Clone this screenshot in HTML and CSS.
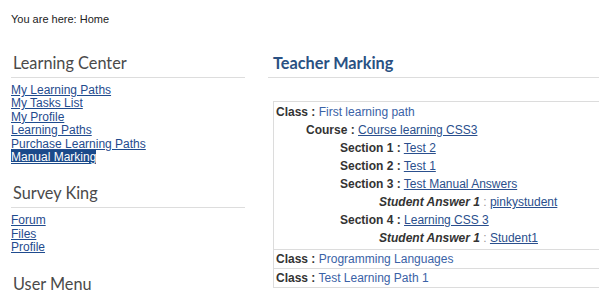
FILE: index.html
```html
<!DOCTYPE html>
<html lang="en">
<head>
    <meta charset="UTF-8">
    <title>Teacher Marking</title>
    <link rel="stylesheet" href="styles.css">
</head>
<body>
    <div class="crumbs">You are here: Home</div>

    <div class="page">
        <div class="sidebar">
            <h3>Learning Center</h3>
            <ul class="menu">
                <li><a href="#">My Learning Paths</a></li>
                <li><a href="#">My Tasks List</a></li>
                <li><a href="#">My Profile</a></li>
                <li><a href="#">Learning Paths</a></li>
                <li><a href="#">Purchase Learning Paths</a></li>
                <li><a href="#" class="active">Manual Marking</a></li>
            </ul>

            <h3>Survey King</h3>
            <ul class="menu">
                <li><a href="#">Forum</a></li>
                <li><a href="#">Files</a></li>
                <li><a href="#">Profile</a></li>
            </ul>

            <h3>User Menu</h3>
        </div>

        <div class="main">
            <h2>Teacher Marking</h2>
            <table class="marking">
                <tr>
                    <td>
                        <div class="line"><b>Class :</b> <a href="#" class="plain">First learning path</a></div>
                        <div class="line lvl1"><b>Course :</b> <a href="#">Course learning CSS3</a></div>
                        <div class="line lvl2"><b>Section 1 :</b> <a href="#">Test 2</a></div>
                        <div class="line lvl2"><b>Section 2 :</b> <a href="#">Test 1</a></div>
                        <div class="line lvl2"><b>Section 3 :</b> <a href="#">Test Manual Answers</a></div>
                        <div class="line lvl3"><b><i>Student Answer 1</i></b> <span class="sep">:</span> <a href="#">pinkystudent</a></div>
                        <div class="line lvl2"><b>Section 4 :</b> <a href="#">Learning CSS 3</a></div>
                        <div class="line lvl3"><b><i>Student Answer 1</i></b> <span class="sep">:</span> <a href="#">Student1</a></div>
                    </td>
                </tr>
                <tr>
                    <td><div class="line"><b>Class :</b> <a href="#" class="plain">Programming Languages</a></div></td>
                </tr>
                <tr>
                    <td><div class="line"><b>Class :</b> <a href="#" class="plain">Test Learning Path 1</a></div></td>
                </tr>
            </table>
        </div>
    </div>
</body>
</html>
```

FILE: styles.css
```css
html {
    overflow: hidden;
}

body {
    font-family: "Liberation Sans", Arial, sans-serif;
    font-size: 12px;
    color: #222;
    background: white;
    margin: 0;
    padding: 0;
}

.crumbs {
    font-size: 11px;
    line-height: 14px;
    padding: 12px 0 0 11px;
}

.page {
    display: grid;
    grid-template-columns: 234px 1fr;
    column-gap: 23px;
    padding-left: 11px;
    margin-top: 27px;
}

/* Sidebar */
.sidebar h3 {
    font-family: Lato, "Open Sans", sans-serif;
    font-weight: normal;
    font-size: 16.3px;
    line-height: 20px;
    color: #4a4a4a;
    margin: 0;
    padding: 0 0 4px 2px;
    border-bottom: 1px solid #ddd;
}

.menu {
    list-style: none;
    margin: 6px 0 19px;
    padding: 0;
    line-height: 13.4px;
}

.menu a {
    color: #1f4b8e;
}

.menu a.active {
    background-color: #1b4a8a;
    color: white;
}

/* Main column */
.main {
    overflow: hidden;
}

.main h2 {
    font-family: Lato, "Open Sans", sans-serif;
    font-weight: bold;
    font-size: 16.3px;
    line-height: 20px;
    color: #2a5183;
    margin: 0;
    padding: 0 0 4px 5px;
    border-bottom: 1px solid #ddd;
}

.marking {
    border-collapse: collapse;
    margin: 23px 0 0 5px;
    width: 340px;
}

.marking td {
    border: 1px solid #dcdcdc;
    padding: 1px 2px 2px;
}

.marking tr + tr td {
    padding: 0 2px;
}

.line {
    line-height: 18px;
    white-space: nowrap;
}

.line b {
    color: #333;
}

.line a {
    color: #2a4f8d;
}

.line a.plain {
    color: #3a62a6;
    text-decoration: none;
}

.sep {
    color: #999;
}

.lvl1 { padding-left: 30px; }
.lvl2 { padding-left: 64px; }
.lvl3 { padding-left: 103px; }
```
